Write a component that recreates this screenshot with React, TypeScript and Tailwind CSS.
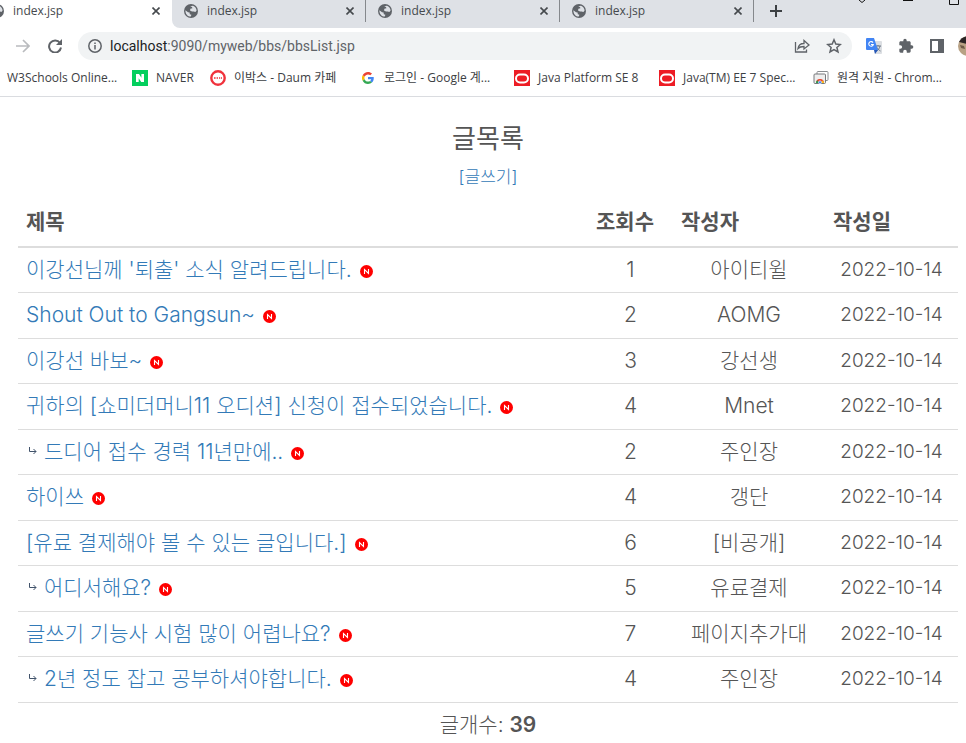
import type { ReactNode } from 'react';

const tabs = ['index.jsp', 'index.jsp', 'index.jsp'];

const posts = [
  { title: "이강선님께 '퇴출' 소식 알려드립니다.", hits: 1, writer: '아이티윌', reply: false },
  { title: 'Shout Out to Gangsun~', hits: 2, writer: 'AOMG', reply: false },
  { title: '이강선 바보~', hits: 3, writer: '강선생', reply: false },
  { title: '귀하의 [쇼미더머니11 오디션] 신청이 접수되었습니다.', hits: 4, writer: 'Mnet', reply: false },
  { title: '드디어 접수 경력 11년만에..', hits: 2, writer: '주인장', reply: true },
  { title: '하이쓰', hits: 4, writer: '갱단', reply: false },
  { title: '[유료 결제해야 볼 수 있는 글입니다.]', hits: 6, writer: '[비공개]', reply: false },
  { title: '어디서해요?', hits: 5, writer: '유료결제', reply: true },
  { title: '글쓰기 기능사 시험 많이 어렵나요?', hits: 7, writer: '페이지추가대', reply: false },
  { title: '2년 정도 잡고 공부하셔야합니다.', hits: 4, writer: '주인장', reply: true },
];
const postDate = '2022-10-14';

function GlobeIcon() {
  return (
    <svg viewBox="0 0 14 14" className="size-3.5 shrink-0" aria-hidden="true">
      <circle cx="7" cy="7" r="7" fill="#5f6368" />
      <path d="M1.4 6.2 4 8.2l1.6.4.2 1.6 1.6.6-.6 1.8C3.8 12.6 1.2 10 1.4 6.2Z" fill="#dee1e6" />
      <path d="M6.2 2.2 9 1.8c2 .8 3.4 2.6 3.6 4.6L11.4 8 9.600 7.400 8 7.600 6 6.400l.4-1.600 2-.6L8 3Z" fill="#dee1e6" />
    </svg>
  );
}

function CloseButton() {
  return (
    <button type="button" aria-label="닫기" className="flex size-4 shrink-0 items-center justify-center">
      <svg viewBox="0 0 8 8" className="size-2" fill="none" stroke="#45494d" strokeWidth="1.6">
        <path d="M.5.5l7 7M7.5.5l-7 7" />
      </svg>
    </button>
  );
}

function NaverIcon() {
  return (
    <svg viewBox="0 0 16 16" className="size-4 shrink-0" aria-hidden="true">
      <path d="M0 0h16v16H0z" fill="#03cf5d" />
      <path d="M4 4h3l2.400 3.800V4H12v8H9.200L6.700 8.200V12H4z" fill="#fff" />
    </svg>
  );
}

function CafeIcon() {
  return (
    <svg viewBox="0 0 16 16" className="size-4 shrink-0" aria-hidden="true">
      <circle cx="8" cy="8" r="6.700" fill="#fff" stroke="#f0323c" strokeWidth="2.400" />
      <path d="M4 8h1.600M6.600 8h1.400M9 8h1M10.800 8H12" stroke="#f0323c" strokeWidth="1.600" />
    </svg>
  );
}

function GoogleIcon() {
  return (
    <svg viewBox="0 0 48 48" className="mx-0.5 size-3 shrink-0" aria-hidden="true">
      <path fill="#ea4335" d="M24 9.500c3.540 0 6.710 1.220 9.210 3.600l6.850-6.850C35.900 2.380 30.470 0 24 0 14.620 0 6.510 5.380 2.560 13.220l7.980 6.190C12.430 13.720 17.740 9.500 24 9.500z" />
      <path fill="#4285f4" d="M46.980 24.550c0-1.570-.15-3.090-.38-4.550H24v9.020h12.940c-.58 2.960-2.260 5.480-4.780 7.180l7.730 6c4.510-4.180 7.090-10.360 7.090-17.650z" />
      <path fill="#fbbc05" d="M10.530 28.590a14.500 14.500 0 0 1 0-9.180l-7.980-6.190a24 24 0 0 0 0 21.560l7.980-6.190z" />
      <path fill="#34a853" d="M24 48c6.480 0 11.930-2.130 15.890-5.810l-7.730-6c-2.150 1.450-4.920 2.300-8.160 2.300-6.260 0-11.570-4.220-13.470-9.910l-7.980 6.190C6.510 42.620 14.620 48 24 48z" />
    </svg>
  );
}

function OracleIcon() {
  return (
    <svg viewBox="0 0 16 16" className="size-4 shrink-0" aria-hidden="true">
      <path d="M0 0h16v16H0z" fill="#ed1c24" />
      <rect x="2" y="4.500" width="12" height="8" rx="4" fill="none" stroke="#fff" strokeWidth="2" />
    </svg>
  );
}

function RemoteIcon() {
  return (
    <svg viewBox="0 0 16 16" className="size-4 shrink-0" aria-hidden="true">
      <rect x="4" y="1.500" width="11" height="9" rx="1" fill="#fff" stroke="#8a8d91" />
      <rect x="1" y="4" width="11.500" height="9.500" rx="1" fill="#eee" stroke="#77797c" />
      <path d="M3 13a4 4 0 0 1 8 0l-2.500-1h-3z" fill="#e8432e" />
      <path d="M3 13a4 4 0 0 1 1.200-2.700L6.200 13z" fill="#24a150" />
      <path d="M11 13a4 4 0 0 0-1.200-2.700L7.800 13z" fill="#fbc116" />
      <circle cx="7" cy="12.300" r="1.500" fill="#4285f4" stroke="#fff" strokeWidth=".6" />
    </svg>
  );
}

function NewBadge() {
  return (
    <svg viewBox="0 0 13 13" className="ml-2 inline-block size-3.25 align-[-1px]" role="img" aria-label="새 글">
      <circle cx="6.500" cy="6.500" r="6.500" fill="#f00" />
      <path d="M4.500 9V4.500l4 4V4" fill="none" stroke="#fff" strokeWidth="1.100" />
    </svg>
  );
}

function ReplyArrow() {
  return (
    <svg viewBox="0 0 10 10" className="mr-1.5 ml-0.5 inline-block size-2.5 align-[3px]" fill="none" stroke="#41536b" aria-hidden="true">
      <path d="M1.500 1v4.500H8M5.500 3 8 5.500 5.500 8" />
    </svg>
  );
}

function Bookmark({ icon, label, className }: { icon?: ReactNode; label: string; className: string }) {
  return (
    <a href="#" className={`flex shrink-0 items-center gap-2 whitespace-nowrap ${className}`}>
      {icon}
      {label}
    </a>
  );
}

function TabStrip() {
  return (
    <div className="relative flex h-7 overflow-hidden bg-white text-xs text-[#45494d]">
      <div className="flex w-43 shrink-0 bg-white">
        <div className="-ml-2.5 flex h-5.5 flex-1 items-center gap-2.25 pr-2">
          <GlobeIcon />
          <span className="flex-1">index.jsp</span>
          <CloseButton />
        </div>
      </div>
      <div className="flex flex-1 rounded-bl-lg bg-[#dee1e6]">
        {tabs.map((tab, i) => (
          <div key={i} className="flex h-5.5 w-48.5 shrink-0 items-center gap-2.25 border-r border-[#85888c] pr-1.75 pl-3">
            <GlobeIcon />
            <span className="flex-1">{tab}</span>
            <CloseButton />
          </div>
        ))}
        <button type="button" aria-label="새 탭" className="ml-4 h-5.5">
          <svg viewBox="0 0 12 12" className="size-3" stroke="#3c4043" strokeWidth="2">
            <path d="M6 0v12M0 6h12" />
          </svg>
        </button>
      </div>
      <svg viewBox="0 0 110 6" className="absolute top-0 right-0 h-1.5 w-27.5" fill="none" stroke="#111" aria-hidden="true">
        <path d="M3 0l3 2.500L9 0M47 .5h10M93.500-2v6.500h9V-2" />
      </svg>
    </div>
  );
}

function Toolbar() {
  return (
    <div className="flex h-9 items-center overflow-hidden pl-4 text-[#5f6368]">
      <button type="button" aria-label="앞으로" className="text-[#b9bbbe]">
        <svg viewBox="0 0 14 14" className="size-3.5" fill="none" stroke="currentColor" strokeWidth="1.700">
          <path d="M0 7h12.500M7 1l6 6-6 6" />
        </svg>
      </button>
      <button type="button" aria-label="새로고침" className="ml-4.5">
        <svg viewBox="0 0 14 14" className="size-3.5" fill="none" stroke="currentColor" strokeWidth="2">
          <path d="M12 4A6 6 0 1 0 13 8.500" />
          <path d="M14 0v6H8z" fill="currentColor" stroke="none" />
        </svg>
      </button>
      <div className="ml-4 flex h-7 flex-1 items-center rounded-full bg-[#f1f3f4] px-2.5">
        <svg viewBox="0 0 14 14" className="size-3.5 shrink-0" fill="none" stroke="currentColor" strokeWidth="1.500" aria-hidden="true">
          <circle cx="7" cy="7" r="6.200" />
          <path d="M7 6v4.500M7 3.500V5" />
        </svg>
        <a href="#" className="ml-2 flex-1 font-[Roboto,sans-serif] text-sm">
          <span className="text-[#202124]">localhost</span>:9090/myweb/bbs/bbsList.jsp
        </a>
        <button type="button" aria-label="공유">
          <svg viewBox="0 0 16 16" className="size-4" fill="none" stroke="currentColor" strokeWidth="1.300">
            <path d="M1.500 4v10h11v-2.500M4 10.500c.5-3.500 2.500-5 6-5V2.500L15 7l-5 4V8.500c-2.500 0-4.500.3-6 2Z" />
          </svg>
        </button>
        <button type="button" aria-label="북마크" className="ml-4">
          <svg viewBox="0 0 16 16" className="size-4" fill="none" stroke="currentColor" strokeWidth="1.500">
            <path d="M8 1.800l1.800 4.300 4.600.4-3.500 3 1.100 4.500L8 11.600 4 14l1.100-4.500-3.500-3 4.600-.4z" />
          </svg>
        </button>
      </div>
      <button type="button" aria-label="번역" className="ml-3.5">
        <svg viewBox="0 0 16 16" className="size-4">
          <path d="M6 3h9a1 1 0 0 1 1 1v11a1 1 0 0 1-1 1H9z" fill="#dcdfe3" />
          <path d="M9 8h6M12 7v1M14 8c-.5 2.500-2 4-3.500 5M10.500 9c1 2 2.500 3 4 4" stroke="#6b7785" fill="none" />
          <path d="M1 0h7l4 12H1a1 1 0 0 1-1-1V1a1 1 0 0 1 1-1z" fill="#4285f4" />
          <path d="M8 12h4l-3 4z" fill="#2457b8" />
          <path d="M7 4.600A2.300 2.300 0 1 0 7.300 6.500H5" stroke="#fff" strokeWidth="1.100" fill="none" />
        </svg>
      </button>
      <button type="button" aria-label="확장 프로그램" className="ml-4">
        <svg viewBox="0 0 24 24" className="size-4" fill="currentColor">
          <path d="M20.500 11H19V7c0-1.100-.9-2-2-2h-4V3.500a2.500 2.500 0 0 0-5 0V5H4c-1.100 0-2 .9-2 2v3.800h1.500a2.700 2.700 0 0 1 0 5.400H2V20c0 1.100.9 2 2 2h3.800v-1.500a2.700 2.700 0 0 1 5.400 0V22H17c1.100 0 2-.9 2-2v-4h1.500a2.500 2.500 0 0 0 0-5z" />
        </svg>
      </button>
      <button type="button" aria-label="사이드 패널" className="ml-4">
        <svg viewBox="0 0 14 14" className="size-3.5" fill="currentColor">
          <path d="M0 0h14v14H0zM2 2v10h6V2z" fillRule="evenodd" />
        </svg>
      </button>
      <button type="button" aria-label="프로필" className="-mr-3 ml-3.5">
        <svg viewBox="0 0 20 20" className="size-5">
          <circle cx="10" cy="10" r="10" fill="#b8a184" />
          <path d="M1 6A10 10 0 0 1 19 6L9 8z" fill="#2a2425" />
          <path d="M2 9l4 1 1 3-4-1z" fill="#6d5a46" />
        </svg>
      </button>
    </div>
  );
}

function BookmarkBar() {
  return (
    <nav className="flex h-8 items-center overflow-hidden pb-1 pl-1.75 text-xs text-[#3c4043]">
      <Bookmark label="W3Schools Online..." className="w-31.25" />
      <Bookmark icon={<NaverIcon />} label="NAVER" className="w-19.5" />
      <Bookmark icon={<CafeIcon />} label="이박스 - Daum 카페" className="w-37.5" />
      <Bookmark icon={<GoogleIcon />} label="로그인 - Google 계..." className="w-38.5" />
      <Bookmark icon={<OracleIcon />} label="Java Platform SE 8" className="w-36.25" />
      <Bookmark icon={<OracleIcon />} label="Java(TM) EE 7 Spec..." className="w-38.5" />
      <Bookmark icon={<RemoteIcon />} label="원격 지원 - Chrom..." className="w-36" />
    </nav>
  );
}

function PostTable() {
  return (
    <table className="mt-2 w-full table-fixed border-collapse text-[21px] leading-7">
      <colgroup>
        <col />
        <col className="w-21.25" />
        <col className="w-38" />
        <col className="w-33.25" />
      </colgroup>
      <thead>
        <tr className="h-12.5 border-b-2 border-[#ddd] text-left">
          <th className="px-2 font-bold">제목</th>
          <th className="px-2 font-bold whitespace-nowrap">조회수</th>
          <th className="px-2 font-bold">작성자</th>
          <th className="px-2 font-bold">작성일</th>
        </tr>
      </thead>
      <tbody>
        {posts.map((post) => (
          <tr key={post.title} className="h-11.25 border-b border-[#ddd] text-center even:h-11.5">
            <td className="px-2 text-left whitespace-nowrap">
              <a href="#" className="text-[#337ab7]">
                {post.reply && <ReplyArrow />}
                {post.title}
              </a>
              <NewBadge />
            </td>
            <td className="px-2">{post.hits}</td>
            <td className="px-2 whitespace-nowrap">{post.writer}</td>
            <td className="px-2 text-[19px] whitespace-nowrap">{postDate}</td>
          </tr>
        ))}
      </tbody>
      <tfoot>
        <tr className="h-11.5 text-center">
          <td colSpan={4}>
            글개수: <strong className="font-semibold">39</strong>
          </td>
        </tr>
      </tfoot>
    </table>
  );
}

export default function App() {
  return (
    <div className="bg-white">
      <header className="border-b border-[#dadce0] font-['Open_Sans','Noto_Sans_CJK_KR',sans-serif]">
        <TabStrip />
        <Toolbar />
        <BookmarkBar />
      </header>
      <main className="pt-6.5 pr-2 pl-4.5 text-center font-['Inter','Noto_Sans_CJK_KR',sans-serif] font-light text-[#555]">
        <h1 className="text-[26px] leading-8 font-normal">글목록</h1>
        <a href="#" className="mt-2.5 inline-block text-[17px] leading-6 text-[#337ab7]">
          [글쓰기]
        </a>
        <PostTable />
      </main>
    </div>
  );
}
